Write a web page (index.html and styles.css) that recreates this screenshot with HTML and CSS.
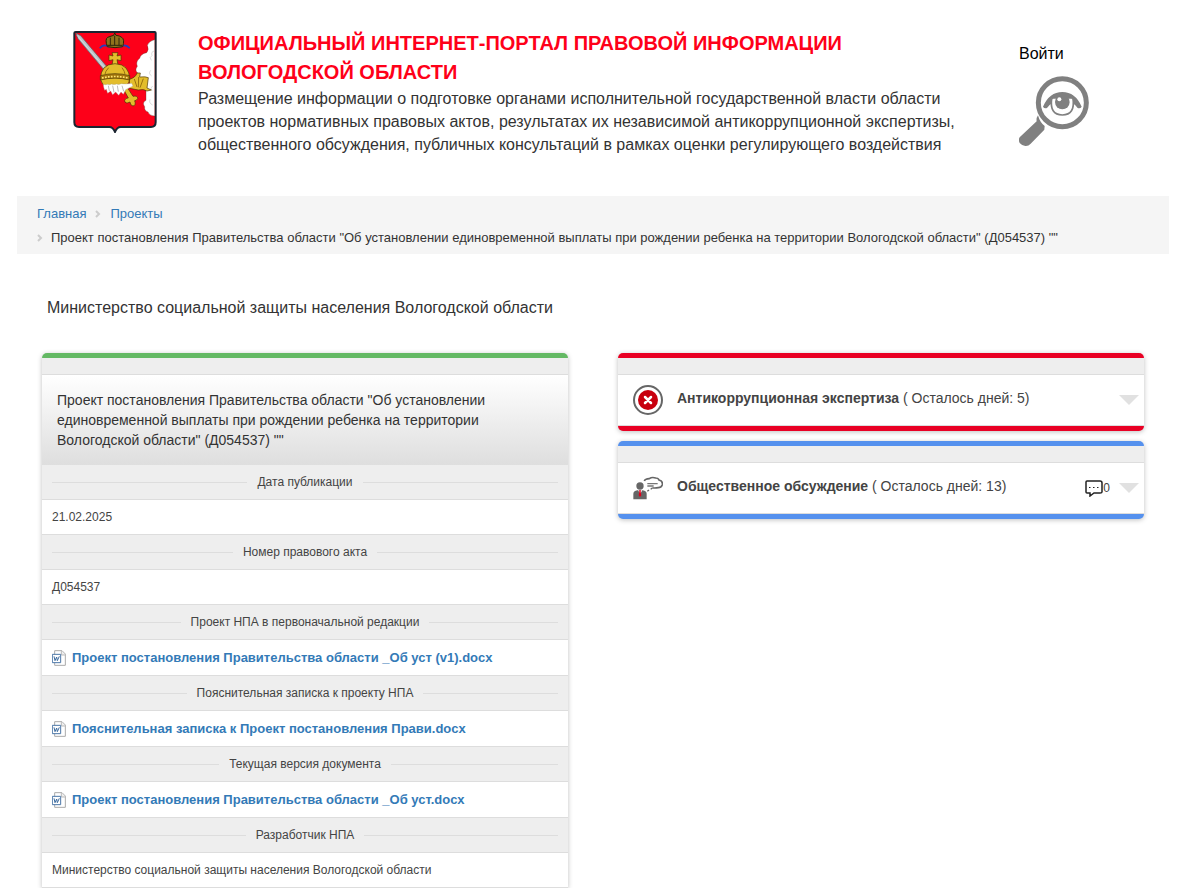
FILE: index.html
```html
<!DOCTYPE html>
<html lang="ru">
<head>
    <meta charset="UTF-8">
    <meta name="viewport" content="width=device-width, initial-scale=1.0">
    <title>Официальный интернет-портал правовой информации Вологодской области</title>
    <link rel="stylesheet" href="styles.css">
</head>
<body>
    <svg class="sprite" width="0" height="0" aria-hidden="true">
        <symbol id="word" viewBox="0 0 42 48">
            <path d="M8 2h22l10 10v34H8z" fill="#fff" stroke="#aaa" stroke-width="3"/>
            <path d="M28 2v13h12" fill="#eee" stroke="#bbb" stroke-width="3"/>
            <path d="M1 13h25v25H1z" fill="#fff" stroke="#4a76a8" stroke-width="3"/>
            <path d="M6 19l3 13 5-11 2 11 6-13" fill="none" stroke="#3d6ca0" stroke-width="3"/>
        </symbol>
    </svg>
    <header class="header">
        <a href="#" class="logo" aria-label="Герб Вологодской области">
            <svg width="84" height="102" viewBox="0 0 250 306">
                <path d="M7 3h237q3 0 3 3v268q0 14-14 14h-91q-11 0-17 15q-6-15-17-15H17q-14 0-14-14V6q0-3 4-3z" fill="#fd0019" stroke="#1b2430" stroke-width="6"/>
                <path d="M244 26q-17 3-22 17q6 13-2 22q-18 3-21 17q-13 10-7 24q-9 12 1 20q-2 16 12 20q0 12 13 14v48q-13 7-4 19q-2 12 10 16q4 12 20 12z" fill="#fff" stroke="#443" stroke-width="1"/>
                <path d="M244 60q-12 1-8 14q-10 4-2 14M232 118q-8 10 3 17M238 165q-10 6-2 14M230 205q-4 12 8 17" fill="none" stroke="#999" stroke-width="1"/>
                <path d="M8 7l14 7 81 96-10 8L14 23z" fill="#bcc4cb" stroke="#566" stroke-width="2"/>
                <path d="M11 13l86 101" stroke="#e3e6e9" stroke-width="2"/>
                <path d="M79 52q10-12 20-8q8 6 12 1M169 52q-10-12-20-8q-8 6-12 1" fill="none" stroke="#1f3fc0" stroke-width="5"/>
                <path d="M102 47q-8-22 1-28q11-4 18-6l3-7 4 7q11 1 17 6q10 6 3 28-23 6-46 0z" fill="#8f721c" stroke="#2c2206" stroke-width="3"/>
                <path d="M111 20v23M124 14v29M137 20v23M102 43h44" stroke="#30270c" stroke-width="3"/>
                <g fill="#e3bd2c" stroke="#4a3505" stroke-width="2">
                    <path d="M116 65h18l-3 10 12-3v17l-12-3 3 16h-18l3-16-12 3V72l12 3z"/>
                    <path d="M82 146q-2-46 43-48q44 2 44 48q-3 17-21 22H99q-14-8-17-22z"/>
                    <path d="M168 145q19-5 23-19h10l-2 12q19-2 26 2l-4 31 13 6-13 3q-11-7-26-3l-26-5z"/>
                    <path d="M149 172l12-4 18 28q14-3 14 7q-5 7-9 6q5 14-5 16q-8-1-9-12q-16 8-16-5q3-8 11-7z"/>
                </g>
                <path d="M81 134q44-12 88 0v13q-44-11-88 0z" fill="#a5780d" stroke="#4a3505" stroke-width="2"/>
                <path d="M86 141q39-9 78 0" fill="none" stroke="#ffe675" stroke-width="5" stroke-dasharray="5 4"/>
                <path d="M106 110q-11 12-11 20M146 110q9 12 9 20M183 144l8 24M196 138l-1 31M210 143l-10 27" fill="none" stroke="#9a7210" stroke-width="3"/>
                <path d="M90 160q7 2 13 0q6 3 12-1q8 3 14 0q7 3 15-1q13 2 31-1l4 8-10 5-12 6-7 14-7-7-7 10-9-10-9 8-6-11-9 7-4-12-5 3q-4-9-4-18z" fill="#fff" stroke="#998" stroke-width="1"/>
                <path d="M105 164l3 16M118 164l4 20M132 164l3 18M146 164l5 17" stroke="#999" stroke-width="2"/>
            </svg>
        </a>
        <div class="title">
            <h1>ОФИЦИАЛЬНЫЙ ИНТЕРНЕТ-ПОРТАЛ ПРАВОВОЙ ИНФОРМАЦИИ ВОЛОГОДСКОЙ ОБЛАСТИ</h1>
            <p>Размещение информации о подготовке органами исполнительной государственной власти области проектов нормативных правовых актов, результатах их независимой антикоррупционной экспертизы, общественного обсуждения, публичных консультаций в рамках оценки регулирующего воздействия</p>
        </div>
        <div class="tools">
            <a href="#" class="login">Войти</a>
            <a href="#" class="vision" aria-label="Версия для слабовидящих">
                <svg width="70" height="72" viewBox="0 0 210 216">
                    <circle cx="130" cy="80" r="72" fill="#fff" stroke="#808080" stroke-width="15"/>
                    <path d="M57 118q6 22 20 32l-1 11-41 42q-7 8-16 7q-9 0-17-9q-5-9 0-17l51-48q-2-9 4-18z" fill="#808080"/>
                    <path d="M72 92Q91 48 130 48Q169 48 188 92q-4 7-12 4Q158 72 130 71Q102 72 84 96q-8 3-12-4z" fill="#808080"/>
                    <path d="M98 68q-7 48 32 49q39-1 32-49" fill="#fff" stroke="#808080" stroke-width="5"/>
                    <path d="M98 71q14-14 32-14t32 14l-1-14H99z" fill="#808080"/>
                    <circle cx="130" cy="78" r="22" fill="#808080"/>
                    <circle cx="121" cy="70" r="6" fill="#fff"/>
                </svg>
            </a>
        </div>
    </header>

    <nav class="breadcrumb">
        <a href="#">Главная</a>
        <svg class="sep" width="6" height="8" viewBox="0 0 6 8"><path d="M1 1l3 3-3 3" fill="none" stroke="#ccc" stroke-width="2"/></svg>
        <a href="#">Проекты</a>
        <div class="current">
            <svg class="sep" width="6" height="8" viewBox="0 0 6 8"><path d="M1 1l3 3-3 3" fill="none" stroke="#ccc" stroke-width="2"/></svg>
            <span>Проект постановления Правительства области "Об установлении единовременной выплаты при рождении ребенка на территории Вологодской области" (Д054537) ""</span>
        </div>
    </nav>

    <main class="main">
        <h2>Министерство социальной защиты населения Вологодской области</h2>
        <div class="columns">
            <section class="panel green">
                <div class="strip"></div>
                <h3 class="project-name">Проект постановления Правительства области "Об установлении единовременной выплаты при рождении ребенка на территории Вологодской области" (Д054537) ""</h3>
                <dl>
                    <dt>Дата публикации</dt>
                    <dd>21.02.2025</dd>
                    <dt>Номер правового акта</dt>
                    <dd>Д054537</dd>
                    <dt>Проект НПА в первоначальной редакции</dt>
                    <dd class="file"><a href="#"><svg width="14" height="16"><use href="#word"/></svg>Проект постановления Правительства области _Об уст (v1).docx</a></dd>
                    <dt>Пояснительная записка к проекту НПА</dt>
                    <dd class="file"><a href="#"><svg width="14" height="16"><use href="#word"/></svg>Пояснительная записка к Проект постановления Прави.docx</a></dd>
                    <dt>Текущая версия документа</dt>
                    <dd class="file"><a href="#"><svg width="14" height="16"><use href="#word"/></svg>Проект постановления Правительства области _Об уст.docx</a></dd>
                    <dt>Разработчик НПА</dt>
                    <dd>Министерство социальной защиты населения Вологодской области</dd>
                </dl>
            </section>

            <div class="stages">
                <section class="panel red">
                    <div class="strip"></div>
                    <button type="button" class="stage">
                        <svg width="30" height="30" viewBox="0 0 30 30">
                            <circle cx="15" cy="15" r="14" fill="#fff" stroke="#666" stroke-width="2"/>
                            <circle cx="15" cy="15" r="10" fill="#c8000f"/>
                            <path d="M12 12l6 6M18 12l-6 6" stroke="#fff" stroke-width="2.5" stroke-linecap="round"/>
                        </svg>
                        <span class="stage-name"><b>Антикоррупционная экспертиза</b> ( Осталось дней: 5)</span>
                        <span class="arrow"></span>
                    </button>
                </section>
                <section class="panel blue">
                    <div class="strip"></div>
                    <button type="button" class="stage">
                        <svg width="30" height="30" viewBox="0 0 90 90">
                            <circle cx="21" cy="39" r="11" fill="#666"/>
                            <path d="M1 79V63q0-9 12-11h16q12 2 12 11v16z" fill="#666"/>
                            <path d="M15 52h13l-6 10z" fill="#fff"/>
                            <path d="M18 52h6l-1 4 2 11-4 5-4-5 2-11z" fill="#e2001a"/>
                            <path d="M34 24q2-6 15-7q8-6 19-2q8 0 10 6q12 3 10 14q-3 9-12 9q-12 2-18 0" fill="none" stroke="#666" stroke-width="5"/>
                            <path d="M43 32h31M43 39h19" stroke="#777" stroke-width="4"/>
                            <path d="M58 45l-5 4M48 51l-5 4" stroke="#666" stroke-width="4"/>
                        </svg>
                        <span class="stage-name"><b>Общественное обсуждение</b> ( Осталось дней: 13)</span>
                        <span class="comments">
                            <svg width="18" height="18" viewBox="0 0 18 18">
                                <path d="M2 2h13q2 0 2 2v9q0 1-2 1H9l-4 3v-3H2q-1 0-1-1V3q0-1 1-1z" fill="#fff" stroke="#222" stroke-width="1.5"/>
                                <path d="M4 8.500h1.500M8 8.500h1.500M12 8.500h1.500" stroke="#222"/>
                            </svg>0
                        </span>
                        <span class="arrow"></span>
                    </button>
                </section>
            </div>
        </div>
    </main>
</body>
</html>
```

FILE: styles.css
```css
body {
    margin: 0 22px 0 17px;
    font-family: "Liberation Sans", Arial, sans-serif;
    color: #333;
    background-color: #fff;
}
a {
    color: #337ab7;
    text-decoration: none;
}
h1, h2, h3, p, dl, dd {
    margin: 0;
}
svg {
    display: block;
    flex: none;
}
.sprite {
    position: absolute;
}

/* header */
.header {
    display: flex;
    align-items: flex-start;
    padding: 29px 0 40px 56px;
}
.logo {
    margin: 2px 41px 0 0;
}
.title {
    flex: 1;
}
.title h1 {
    font-size: 20px;
    line-height: 29px;
    color: #ff0019;
}
.title p {
    font-size: 16px;
    line-height: 23px;
}
.tools {
    width: 150px;
    margin-left: 40px;
    padding-top: 13px;
}
.login {
    display: block;
    margin-bottom: 11px;
    font-size: 16px;
    line-height: 23px;
    color: #000;
}
.vision {
    display: inline-block;
}

/* breadcrumb */
.breadcrumb {
    display: flex;
    flex-wrap: wrap;
    align-items: center;
    gap: 0 9px;
    padding: 6px 20px 4px;
    background-color: #f5f5f5;
    font-size: 13px;
    line-height: 24px;
}
.breadcrumb .current {
    display: flex;
    align-items: center;
    gap: 8px;
    width: 100%;
}

/* content */
.main {
    padding: 42px 25px 0;
}
.main h2 {
    margin: 0 0 34px 5px;
    font-size: 16px;
    font-weight: normal;
    line-height: 23px;
}
.columns {
    display: grid;
    grid-template-columns: 1fr 1fr;
    align-items: start;
    gap: 50px;
}
.panel {
    border-top: 5px solid;
    border-radius: 5px;
    box-shadow: 0 1px 5px rgba(0, 0, 0, 0.25);
    background-color: #fff;
    overflow: hidden;
}
.panel.green {
    border-color: #64b964;
    border-radius: 5px 5px 0 0;
}
.panel.red {
    border-color: #e90024;
    border-bottom: 5px solid #e90024;
}
.panel.blue {
    border-color: #5591ee;
    border-bottom: 5px solid #5591ee;
}
.strip {
    height: 16px;
    border-bottom: 1px solid #ddd;
    background-color: #eee;
}
.project-name {
    padding: 15px;
    background: linear-gradient(#fff, #dedede);
    font-size: 14px;
    font-weight: normal;
    line-height: 20px;
}
dt, dd {
    border-bottom: 1px solid #ddd;
    padding: 0 10px;
    font-size: 12px;
    line-height: 34px;
    color: #444;
}
dt {
    display: flex;
    align-items: center;
    gap: 10px;
    background-color: #eee;
}
dt::before,
dt::after {
    content: "";
    flex: 1;
    height: 1px;
    background-color: #ddd;
}
.file a {
    display: flex;
    align-items: center;
    gap: 6px;
    font-size: 13px;
    font-weight: bold;
    line-height: 35px;
}

/* stages */
.stages {
    display: grid;
    gap: 10px;
}
.stage {
    display: flex;
    align-items: center;
    width: 100%;
    height: 51px;
    padding: 0 5px 0 15px;
    border: 0;
    border-bottom: 1px solid #ddd;
    background-color: #fff;
    font-family: inherit;
    font-size: 14px;
    color: #444;
    text-align: left;
    cursor: pointer;
}
.stage-name {
    flex: 1;
    padding: 0 0 4px 14px;
    line-height: 20px;
}
.comments {
    display: flex;
    align-items: center;
    margin-right: 9px;
    font-size: 12px;
}
.arrow {
    border: 10px solid transparent;
    border-top-color: #e1e1e1;
    border-bottom: 0;
}
```
